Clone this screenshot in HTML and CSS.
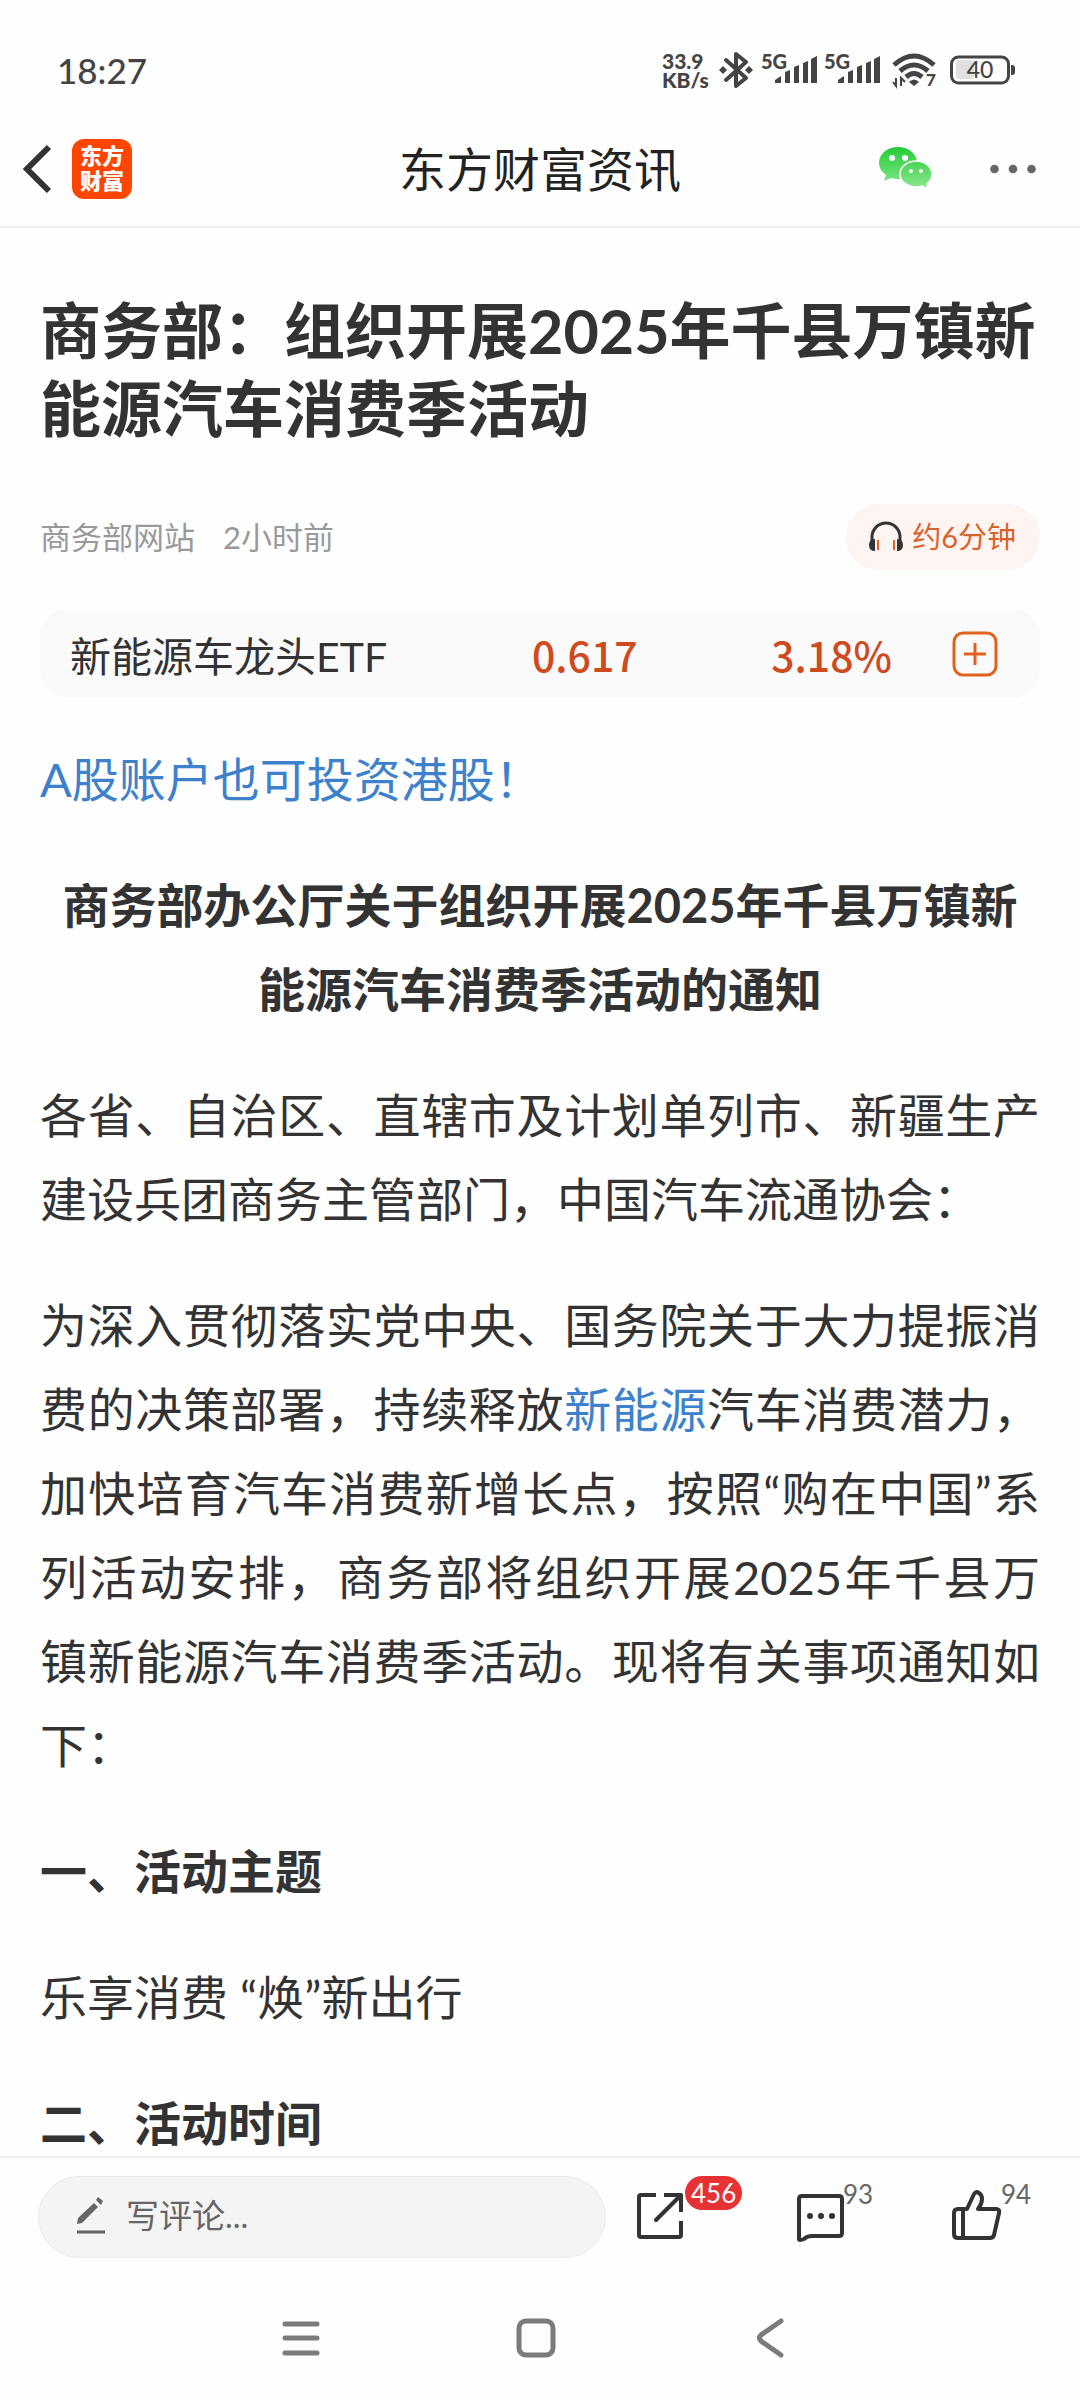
FILE: index.html
```html
<!DOCTYPE html>
<html lang="zh-CN">
<head>
<meta charset="utf-8">
<meta name="viewport" content="width=device-width, initial-scale=1">
<title>东方财富资讯</title>
<link rel="stylesheet" href="styles.css">
</head>
<body>
<div class="status">
  <time class="clock">18:27</time>
  <div class="speed"><span>33.9</span><span>KB/s</span></div>
  <svg class="bluetooth" width="36" height="38" viewBox="0 0 36 38" aria-hidden="true">
    <path d="M8 9 28 27 18 35V3l10 8L8 29" fill="none" stroke="#444" stroke-width="4" stroke-linejoin="round" stroke-linecap="round"/>
    <path d="m5 15 4 4-4 4-4-4zM31 15l4 4-4 4-4-4z" fill="#444"/>
  </svg>
  <svg class="signal" width="60" height="48" viewBox="0 -6 60 48" aria-hidden="true">
    <text x="1" y="17" class="net">5G</text>
    <path d="M15 31v-3l6-4v7zM25 31V20l5-2v13zM34 31V15l5-2v18zM43 31V11l5-2v22zM51 31V7l6-3v27z" fill="#444"/>
  </svg>
  <svg class="signal" width="60" height="48" viewBox="0 -6 60 48" aria-hidden="true">
    <text x="1" y="17" class="net">5G</text>
    <path d="M15 31v-3l6-4v7zM25 31V20l5-2v13zM34 31V15l5-2v18zM43 31V11l5-2v22zM51 31V7l6-3v27z" fill="#444"/>
  </svg>
  <svg class="wifi" width="46" height="48" viewBox="0 -6 46 48" aria-hidden="true">
    <path d="M2 13Q22-5 42 13M8 19Q22 7 36 19M14 25Q22 18 30 25" fill="none" stroke="#444" stroke-width="5"/>
    <path d="M17 30q5-5 10 0l-5 4z" fill="#444"/>
    <path d="M4 26v8l-3-4M9 34v-8l4 4" fill="none" stroke="#444" stroke-width="2"/>
    <text x="34" y="34" class="gen">7</text>
  </svg>
  <svg class="battery" width="66" height="30" viewBox="0 0 66 30" aria-hidden="true">
    <rect x="6" y="5" width="18" height="19" rx="4" fill="#e0e0e0"/>
    <rect x="1.5" y="2" width="57" height="26" rx="7" fill="none" stroke="#444" stroke-width="3"/>
    <path d="M61 10h1q3 0 3 3v4q0 3-3 3h-1z" fill="#444"/>
    <text x="30" y="23" class="level">40</text>
  </svg>
</div>

<header class="header">
  <div class="header-left">
    <button class="back" aria-label="返回">
      <svg width="32" height="52" viewBox="0 0 32 52"><path d="M27 4 5 26l22 22" fill="none" stroke="#333" stroke-width="6"/></svg>
    </button>
    <span class="logo">东方<br>财富</span>
  </div>
  <h1 class="app-title">东方财富资讯</h1>
  <div class="header-right">
    <button class="wechat" aria-label="微信分享">
      <svg width="56" height="46" viewBox="0 0 56 46">
        <defs><linearGradient id="leaf" x1="0" y1="0" x2="0" y2="46" gradientUnits="userSpaceOnUse"><stop offset="0" stop-color="#23cb34"/><stop offset="1" stop-color="#93ea98"/></linearGradient></defs>
        <path d="M20 1c11 0 19 7 19 16S31 33 20 33q-4 0-7-1l-7 3 2-6Q1 24 1 17C1 8 9 1 20 1z" fill="url(#leaf)"/>
        <path d="M38 15c9 0 16 6 16 13q0 6-5 10l1 5-6-3q-3 1-6 1c-9 0-16-6-16-13s7-13 16-13z" fill="url(#leaf)" stroke="#fff" stroke-width="1.5"/>
        <g fill="#fff"><circle cx="14" cy="12" r="3"/><circle cx="27" cy="12" r="3"/><circle cx="33" cy="25" r="2"/><circle cx="43" cy="25" r="2"/></g>
      </svg>
    </button>
    <button class="more" aria-label="更多">
      <svg width="46" height="10" viewBox="0 0 46 10" fill="#666"><circle cx="4.500" cy="5" r="4.300"/><circle cx="23" cy="5" r="4.300"/><circle cx="41.500" cy="5" r="4.300"/></svg>
    </button>
  </div>
</header>

<main class="article">
  <h2 class="headline">商务部：组织开展2025年千县万镇新能源汽车消费季活动</h2>
  <div class="meta">
    <span>商务部网站</span><span>2小时前</span>
    <button class="listen">
      <svg width="36" height="32" viewBox="0 0 36 32"><path d="M4 22v-6a14 14 0 0 1 28 0v6" fill="none" stroke="#333" stroke-width="3"/><path d="M7 18v12q-6 0-6-6t6-6zM29 18v12q6 0 6-6t-6-6z" fill="#333"/><path d="M10 19v10M26 19v10" stroke="#e8601c" stroke-width="2"/></svg>
      约6分钟
    </button>
  </div>
  <div class="quote">
    <a class="quote-name" href="#">新能源车龙头ETF</a>
    <span class="price">0.617</span>
    <span class="change">3.18%</span>
    <button class="add" aria-label="加自选">
      <svg width="46" height="46" viewBox="0 0 46 46" fill="none" stroke="#e2611f" stroke-width="3"><rect x="2" y="2" width="42" height="42" rx="9"/><path d="M12 23h22M23 12v22"/></svg>
    </button>
  </div>
  <div class="body">
    <p><a href="#">A股账户也可投资港股！</a></p>
    <h3 class="center">商务部办公厅关于组织开展2025年千县万镇新能源汽车消费季活动的通知</h3>
    <p>各省、自治区、直辖市及计划单列市、新疆生产建设兵团商务主管部门，中国汽车流通协会：</p>
    <p>为深入贯彻落实党中央、国务院关于大力提振消费的决策部署，持续释放<a href="#">新能源</a>汽车消费潜力，加快培育汽车消费新增长点，按照“购在中国”系列活动安排，商务部将组织开展2025年千县万镇新能源汽车消费季活动。现将有关事项通知如下：</p>
    <h3>一、活动主题</h3>
    <p>乐享消费 “焕”新出行</p>
    <h3>二、活动时间</h3>
  </div>
</main>

<footer class="actions">
  <label class="comment-box">
    <svg width="30" height="40" viewBox="0 0 30 40" aria-hidden="true"><path d="m18 8 4 4L6 28l-5 1 1-6zM20 5l2-3 5 4-2 4z" fill="#666"/><path d="M1 37h28" stroke="#666" stroke-width="3"/></svg>
    <input type="text" placeholder="写评论..." aria-label="写评论">
  </label>
  <button class="action" aria-label="分享">
    <svg width="50" height="52" viewBox="0 0 50 52" fill="none" stroke="#333" stroke-width="4" stroke-linejoin="round"><path d="M20 5H5q-2 0-2 2v38q0 2 2 2h38q2 0 2-2V31M28 5h17v17"/><path d="M43 7 20 30" stroke-linecap="round"/></svg>
    <span class="badge">456</span>
  </button>
  <button class="action" aria-label="评论">
    <svg width="50" height="52" viewBox="0 0 50 52" fill="none" stroke="#333" stroke-width="4" stroke-linejoin="round"><path d="M7 6h38q3 0 3 3v34q0 3-3 3H18q-5 0-8 3-5 2-5 0V9q0-3 3-3z"/><g fill="#333" stroke="none"><circle cx="16" cy="26" r="3"/><circle cx="27" cy="26" r="3"/><circle cx="38" cy="26" r="3"/></g></svg>
    <span class="count">93</span>
  </button>
  <button class="action" aria-label="点赞">
    <svg width="50" height="52" viewBox="0 0 50 52" fill="none" stroke="#333" stroke-width="4" stroke-linejoin="round"><path d="M11 19h4L22 4q2-3 5-1 3 2 3 6 0 5-4 10h18q4 0 3 4l-5 22q-1 3-4 3H6q-4 0-4-4V23q0-4 4-4zM11 19v29"/></svg>
    <span class="count">94</span>
  </button>
</footer>

<nav class="system">
  <button aria-label="最近任务"><svg width="40" height="40" viewBox="0 0 40 40"><path d="M4 6h32M4 20h32M4 35h32" stroke="#7b7b7b" stroke-width="5" stroke-linecap="round"/></svg></button>
  <button aria-label="主屏幕"><svg width="40" height="40" viewBox="0 0 40 40"><rect x="3" y="3" width="34" height="34" rx="7" fill="none" stroke="#7b7b7b" stroke-width="5"/></svg></button>
  <button aria-label="返回上级"><svg width="40" height="40" viewBox="0 0 40 40"><path d="M30 3 10 17q-3 3 0 6l20 14" fill="none" stroke="#7b7b7b" stroke-width="5" stroke-linecap="round"/></svg></button>
</nav>
</body>
</html>
```
FILE: styles.css
```css
* { box-sizing: border-box; }

body {
  margin: 0;
  height: 100vh;
  display: flex;
  flex-direction: column;
  background: #fefefe;
  color: #333;
  font-family: Lato, "Noto Sans CJK SC", sans-serif;
}

button {
  display: flex;
  align-items: center;
  padding: 0;
  border: 0;
  background: none;
  color: inherit;
  font: inherit;
}

svg { display: block; flex: none; }
a { color: #3d80cc; text-decoration: none; }

/* Status bar */
.status {
  flex: none;
  display: flex;
  align-items: center;
  height: 112px;
  padding: 28px 64px 0 57px;
  color: #444;
}
.clock { margin-right: auto; font-size: 35px; font-weight: 500; }
.speed {
  display: flex;
  flex-direction: column;
  width: 48px;
  margin-right: 8px;
  font-size: 21px;
  font-weight: 900;
  line-height: 19px;
}
.bluetooth { margin-right: 6px; }
.signal { margin-right: 3px; }
.wifi { margin: 0 12px 0 6px; }
.net { font-size: 20px; font-weight: 900; fill: #444; }
.gen { font-size: 17px; font-weight: 900; fill: #444; }
.level { font-size: 23px; font-weight: 500; fill: #444; text-anchor: middle; }

/* App header */
.header {
  flex: none;
  display: grid;
  grid-template-columns: 1fr auto 1fr;
  align-items: center;
  height: 116px;
  padding: 0 22px;
  border-bottom: 2px solid #eee;
}
.header-left, .header-right { display: flex; align-items: center; }
.header-left { gap: 18px; }
.header-right { justify-content: flex-end; gap: 56px; padding-right: 22px; }
.logo {
  width: 60px;
  height: 60px;
  padding-top: 4px;
  border-radius: 12px;
  background: #ff4500;
  color: #fff;
  font-size: 22px;
  font-weight: 900;
  line-height: 25px;
  text-align: center;
}
.app-title {
  margin: 0;
  color: #222;
  font-size: 47px;
  font-weight: 400;
  line-height: 60px;
}

/* Article */
.article {
  flex: 1;
  min-height: 0;
  overflow: hidden;
  padding: 64px 40px 0;
}
.headline { margin: 0; font-size: 61px; font-weight: 700; line-height: 78px; }
.meta {
  display: flex;
  align-items: center;
  gap: 28px;
  margin-top: 56px;
  color: #999;
  font-size: 31px;
  line-height: 36px;
}
.listen {
  gap: 8px;
  height: 66px;
  margin-left: auto;
  padding: 0 24px 0 22px;
  border-radius: 33px;
  background: #fef5f2;
  color: #d9622b;
  font-size: 29px;
}
.quote {
  display: grid;
  grid-template-columns: 400px 1fr 1fr 106px;
  align-items: center;
  height: 88px;
  margin-top: 40px;
  padding: 0 42px 0 30px;
  border-radius: 26px;
  background: #fafafa;
  font-size: 41px;
}
.quote-name { color: #333; }
.price, .change {
  color: #cf4a1f;
  font-family: "Noto Sans CJK SC", sans-serif;
  font-weight: 500;
}
.price { padding-left: 62px; }
.change { text-align: right; }
.add { justify-self: end; }

.body { padding-top: 39px; font-size: 47px; line-height: 84px; }
.body p, .body h3 { margin: 0 0 42px; font-size: 47px; }
.body p { text-align: justify; }
.body h3 { font-weight: 700; }
.body .center { text-align: center; }

/* Comment bar */
.actions {
  flex: none;
  display: flex;
  align-items: flex-start;
  height: 126px;
  padding: 18px 0 0 38px;
  border-top: 2px solid #eee;
  background: #fefefe;
}
.comment-box {
  flex: 1;
  display: flex;
  align-items: center;
  gap: 20px;
  height: 82px;
  padding: 0 37px 4px;
  border: 1px solid #eaeaea;
  border-radius: 41px;
  background: #f4f4f4;
}
.comment-box input {
  flex: 1;
  min-width: 0;
  padding: 0;
  border: 0;
  outline: 0;
  background: none;
  color: #666;
  font: inherit;
  font-size: 33px;
}
.comment-box input::placeholder { color: #666; }
.action {
  align-items: flex-start;
  width: 158px;
  padding-top: 14px;
  position: relative;
}
.comment-box + .action { margin-left: 30px; }
.action:last-child { width: 128px; }
.count, .badge { position: absolute; left: 49px; font-size: 26px; line-height: 34px; }
.count { top: 1px; color: #666; }
.badge {
  top: 0;
  padding: 0 6px;
  border-radius: 17px;
  background: #e73133;
  color: #fff;
}

/* System navigation */
.system {
  flex: none;
  display: flex;
  justify-content: center;
  gap: 195px;
  height: 118px;
  padding: 36px 8px 0 0;
  align-items: flex-start;
}
```
